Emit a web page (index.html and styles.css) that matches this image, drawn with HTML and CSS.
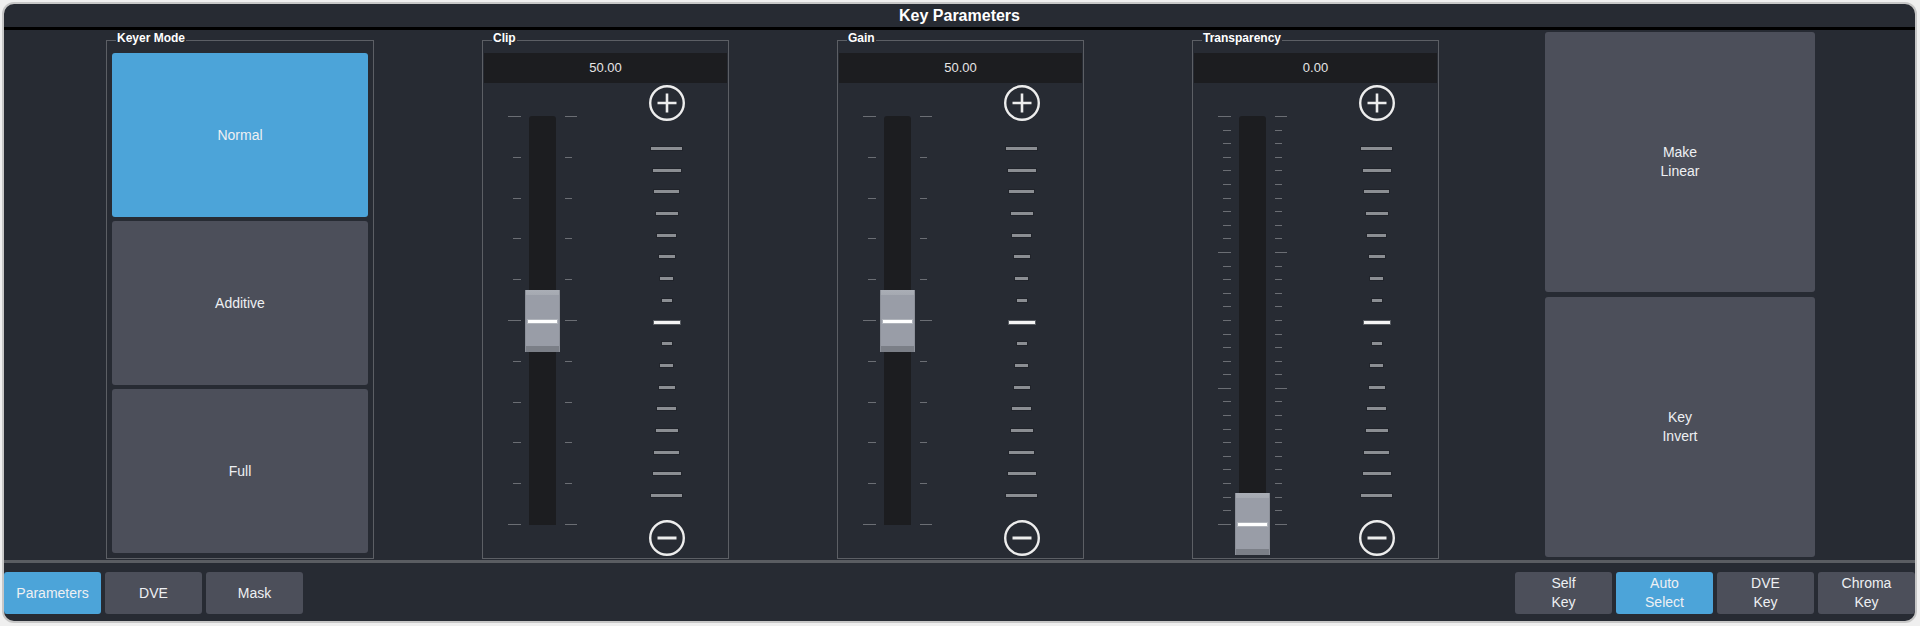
FILE: index.html
```html
<!DOCTYPE html>
<html lang="en">
<head>
<meta charset="utf-8">
<title>Key Parameters</title>
<link rel="stylesheet" href="styles.css">
</head>
<body>
<div class="frame">
  <div class="title">Key Parameters</div>
  <div class="content">
    <div class="group keyer">
      <div class="legend">Keyer Mode</div>
      <div class="mode-stack">
        <div class="btn mode active">Normal</div>
        <div class="btn mode">Additive</div>
        <div class="btn mode">Full</div>
      </div>
    </div>

    <div class="group fader-group">
      <div class="legend">Clip</div>
      <div class="value">50.00</div>
      <div class="fader-body">
        <div class="scale-col">
          <div class="ticks ticks-l">
            <i class="tick major"></i><i class="tick"></i><i class="tick"></i><i class="tick"></i><i class="tick"></i><i class="tick major"></i><i class="tick"></i><i class="tick"></i><i class="tick"></i><i class="tick"></i><i class="tick major"></i>
          </div>
          <div class="zone">
            <div class="track"></div>
            <div class="thumb" style="top:174px"></div>
          </div>
          <div class="ticks ticks-r">
            <i class="tick major"></i><i class="tick"></i><i class="tick"></i><i class="tick"></i><i class="tick"></i><i class="tick major"></i><i class="tick"></i><i class="tick"></i><i class="tick"></i><i class="tick"></i><i class="tick major"></i>
          </div>
        </div>
        <div class="jog-col">
          <svg class="pm" viewBox="0 0 36 36"><circle cx="18" cy="18" r="16.8" fill="none" stroke="#ededed" stroke-width="2.4"/><path d="M8.5 18h19M18 8.5v19" stroke="#ededed" stroke-width="2.6" fill="none"/></svg>
          <div class="rungs">
            <i class="rung r8"></i><i class="rung r7"></i><i class="rung r6"></i><i class="rung r5"></i><i class="rung r4"></i><i class="rung r3"></i><i class="rung r2"></i><i class="rung r1"></i>
            <i class="rung mid"></i>
            <i class="rung r1"></i><i class="rung r2"></i><i class="rung r3"></i><i class="rung r4"></i><i class="rung r5"></i><i class="rung r6"></i><i class="rung r7"></i><i class="rung r8"></i>
          </div>
          <svg class="pm" viewBox="0 0 36 36"><circle cx="18" cy="18" r="16.8" fill="none" stroke="#ededed" stroke-width="2.4"/><path d="M8.5 18h19" stroke="#ededed" stroke-width="3" fill="none"/></svg>
        </div>
      </div>
    </div>

    <div class="group fader-group">
      <div class="legend">Gain</div>
      <div class="value">50.00</div>
      <div class="fader-body">
        <div class="scale-col">
          <div class="ticks ticks-l">
            <i class="tick major"></i><i class="tick"></i><i class="tick"></i><i class="tick"></i><i class="tick"></i><i class="tick major"></i><i class="tick"></i><i class="tick"></i><i class="tick"></i><i class="tick"></i><i class="tick major"></i>
          </div>
          <div class="zone">
            <div class="track"></div>
            <div class="thumb" style="top:174px"></div>
          </div>
          <div class="ticks ticks-r">
            <i class="tick major"></i><i class="tick"></i><i class="tick"></i><i class="tick"></i><i class="tick"></i><i class="tick major"></i><i class="tick"></i><i class="tick"></i><i class="tick"></i><i class="tick"></i><i class="tick major"></i>
          </div>
        </div>
        <div class="jog-col">
          <svg class="pm" viewBox="0 0 36 36"><circle cx="18" cy="18" r="16.8" fill="none" stroke="#ededed" stroke-width="2.4"/><path d="M8.5 18h19M18 8.5v19" stroke="#ededed" stroke-width="2.6" fill="none"/></svg>
          <div class="rungs">
            <i class="rung r8"></i><i class="rung r7"></i><i class="rung r6"></i><i class="rung r5"></i><i class="rung r4"></i><i class="rung r3"></i><i class="rung r2"></i><i class="rung r1"></i>
            <i class="rung mid"></i>
            <i class="rung r1"></i><i class="rung r2"></i><i class="rung r3"></i><i class="rung r4"></i><i class="rung r5"></i><i class="rung r6"></i><i class="rung r7"></i><i class="rung r8"></i>
          </div>
          <svg class="pm" viewBox="0 0 36 36"><circle cx="18" cy="18" r="16.8" fill="none" stroke="#ededed" stroke-width="2.4"/><path d="M8.5 18h19" stroke="#ededed" stroke-width="3" fill="none"/></svg>
        </div>
      </div>
    </div>

    <div class="group fader-group">
      <div class="legend">Transparency</div>
      <div class="value">0.00</div>
      <div class="fader-body">
        <div class="scale-col">
          <div class="ticks ticks-l">
            <i class="tick major"></i><i class="tick"></i><i class="tick"></i><i class="tick"></i><i class="tick"></i><i class="tick"></i><i class="tick"></i><i class="tick"></i><i class="tick"></i><i class="tick"></i>
            <i class="tick major"></i><i class="tick"></i><i class="tick"></i><i class="tick"></i><i class="tick"></i><i class="tick"></i><i class="tick"></i><i class="tick"></i><i class="tick"></i><i class="tick"></i>
            <i class="tick major"></i><i class="tick"></i><i class="tick"></i><i class="tick"></i><i class="tick"></i><i class="tick"></i><i class="tick"></i><i class="tick"></i><i class="tick"></i><i class="tick"></i>
            <i class="tick major"></i>
          </div>
          <div class="zone">
            <div class="track"></div>
            <div class="thumb" style="top:377px"></div>
          </div>
          <div class="ticks ticks-r">
            <i class="tick major"></i><i class="tick"></i><i class="tick"></i><i class="tick"></i><i class="tick"></i><i class="tick"></i><i class="tick"></i><i class="tick"></i><i class="tick"></i><i class="tick"></i>
            <i class="tick major"></i><i class="tick"></i><i class="tick"></i><i class="tick"></i><i class="tick"></i><i class="tick"></i><i class="tick"></i><i class="tick"></i><i class="tick"></i><i class="tick"></i>
            <i class="tick major"></i><i class="tick"></i><i class="tick"></i><i class="tick"></i><i class="tick"></i><i class="tick"></i><i class="tick"></i><i class="tick"></i><i class="tick"></i><i class="tick"></i>
            <i class="tick major"></i>
          </div>
        </div>
        <div class="jog-col">
          <svg class="pm" viewBox="0 0 36 36"><circle cx="18" cy="18" r="16.8" fill="none" stroke="#ededed" stroke-width="2.4"/><path d="M8.5 18h19M18 8.5v19" stroke="#ededed" stroke-width="2.6" fill="none"/></svg>
          <div class="rungs">
            <i class="rung r8"></i><i class="rung r7"></i><i class="rung r6"></i><i class="rung r5"></i><i class="rung r4"></i><i class="rung r3"></i><i class="rung r2"></i><i class="rung r1"></i>
            <i class="rung mid"></i>
            <i class="rung r1"></i><i class="rung r2"></i><i class="rung r3"></i><i class="rung r4"></i><i class="rung r5"></i><i class="rung r6"></i><i class="rung r7"></i><i class="rung r8"></i>
          </div>
          <svg class="pm" viewBox="0 0 36 36"><circle cx="18" cy="18" r="16.8" fill="none" stroke="#ededed" stroke-width="2.4"/><path d="M8.5 18h19" stroke="#ededed" stroke-width="3" fill="none"/></svg>
        </div>
      </div>
    </div>

    <div class="actions">
      <div class="btn action">Make<br>Linear</div>
      <div class="btn action">Key<br>Invert</div>
    </div>
  </div>
  <div class="sep"></div>
  <div class="bottom">
    <div class="tabs">
      <div class="btn tab active">Parameters</div>
      <div class="btn tab">DVE</div>
      <div class="btn tab">Mask</div>
    </div>
    <div class="tabs">
      <div class="btn tab">Self<br>Key</div>
      <div class="btn tab active">Auto<br>Select</div>
      <div class="btn tab">DVE<br>Key</div>
      <div class="btn tab">Chroma<br>Key</div>
    </div>
  </div>
</div>
</body>
</html>
```
FILE: styles.css
```css
html, body {
  margin: 0;
  height: 100%;
}
body {
  background: #efefef;
  font-family: "Liberation Sans", Arial, sans-serif;
  overflow: hidden;
}
.frame {
  box-sizing: border-box;
  width: 1915px;
  height: 621px;
  margin: 2px 0 0 2px;
  border: 2px solid #c7c7c7;
  border-radius: 12px;
  background: #272b33;
  overflow: hidden;
  display: flex;
  flex-direction: column;
  color: #eef0f2;
}
.title {
  height: 23px;
  line-height: 23px;
  text-align: center;
  font-weight: bold;
  font-size: 16px;
  color: #ffffff;
  border-bottom: 3px solid #000000;
  flex: none;
}
.content {
  box-sizing: border-box;
  height: 530px;
  flex: none;
  display: flex;
  align-items: flex-start;
  padding-left: 102px;
  gap: 108px;
}
.sep {
  height: 3px;
  flex: none;
  background: #5a5d62;
}
.bottom {
  flex: 1;
  box-sizing: border-box;
  padding-top: 9px;
  display: flex;
  justify-content: space-between;
  align-items: flex-start;
}
.tabs {
  display: flex;
  gap: 4px;
}
.btn {
  background: #4c4f5a;
  border-radius: 3px;
  display: flex;
  align-items: center;
  justify-content: center;
  text-align: center;
  font-size: 14px;
  line-height: 19px;
  color: #eef0f3;
}
.btn.active {
  background: #4ca4d9;
}
.tab {
  width: 97px;
  height: 42px;
}

/* groups */
.group {
  box-sizing: border-box;
  margin-top: 10px;
  height: 519px;
  border: 1px solid #5c5f65;
  display: flex;
  flex-direction: column;
  flex: none;
}
.legend {
  align-self: flex-start;
  margin: -9px 0 0 9px;
  padding: 0 1px;
  background: #272b33;
  font-weight: bold;
  font-size: 12px;
  line-height: 12px;
  color: #ffffff;
}
.keyer {
  width: 268px;
}
.mode-stack {
  flex: 1;
  display: flex;
  flex-direction: column;
  gap: 4px;
  margin: 9px 5px 5px;
}
.mode {
  flex: 1;
}

/* faders */
.fader-group {
  width: 247px;
}
.value {
  margin: 9px 1px 0;
  height: 30px;
  line-height: 30px;
  background: #1c1d20;
  text-align: center;
  font-size: 13px;
  color: #e6e6e6;
}
.fader-body {
  flex: 1;
  display: flex;
}
.scale-col {
  box-sizing: border-box;
  width: 120px;
  padding: 33px 0 0 25px;
  display: flex;
  align-items: flex-start;
}
.ticks {
  height: 409px;
  display: flex;
  flex-direction: column;
  justify-content: space-between;
}
.ticks-l {
  width: 13px;
  align-items: flex-end;
}
.ticks-r {
  width: 12px;
  align-items: flex-start;
}
.tick {
  display: block;
  height: 1px;
  width: 8px;
  background: #6b6e74;
}
.ticks-r .tick {
  width: 7px;
}
.ticks .tick.major {
  width: 100%;
}
.zone {
  position: relative;
  width: 35px;
  height: 409px;
  margin: 0 5px 0 4px;
}
.track {
  width: 27px;
  height: 100%;
  margin: 0 auto;
  background: #1c1d20;
  border-radius: 3px 3px 0 0;
}
.thumb {
  position: absolute;
  left: 0;
  box-sizing: border-box;
  width: 35px;
  height: 62px;
  border-left: 1px solid #8c9099;
  border-right: 1px solid #8c9099;
  background: linear-gradient(#aaaeb6 0, #a5a9b1 5px, #999da7 5px, #999da7 56px, #7b7f87 56px, #7b7f87 100%);
}
.thumb::after {
  content: "";
  position: absolute;
  left: 2px;
  right: 2px;
  top: 30px;
  height: 3px;
  background: #ffffff;
  box-shadow: 0 0 0 1px rgba(190, 193, 199, 0.6);
}
.jog-col {
  box-sizing: border-box;
  width: 125px;
  padding: 2px 0 0 2px;
  display: flex;
  flex-direction: column;
  align-items: center;
}
.pm {
  display: block;
  width: 36px;
  height: 36px;
  flex: none;
}
.rungs {
  height: 350px;
  margin: 26px 0 23px;
  display: flex;
  flex-direction: column;
  justify-content: space-between;
  align-items: center;
}
.rung {
  display: block;
  height: 3px;
  background: #8b8e93;
  box-shadow: 0 0 0 1px rgba(22, 24, 28, 0.35);
}
.rung.mid {
  width: 26px;
  background: #f4f4f4;
  box-shadow: 0 0 0 1px rgba(140, 143, 148, 0.5);
}
.r1 { width: 10px; }
.r2 { width: 13px; }
.r3 { width: 16px; }
.r4 { width: 19px; }
.r5 { width: 22px; }
.r6 { width: 25px; }
.r7 { width: 28px; }
.r8 { width: 31px; }

/* right actions */
.actions {
  width: 270px;
  height: 525px;
  margin: 2px 0 0 -2px;
  display: flex;
  flex-direction: column;
  gap: 5px;
  flex: none;
}
.action {
  flex: 1;
}
```
